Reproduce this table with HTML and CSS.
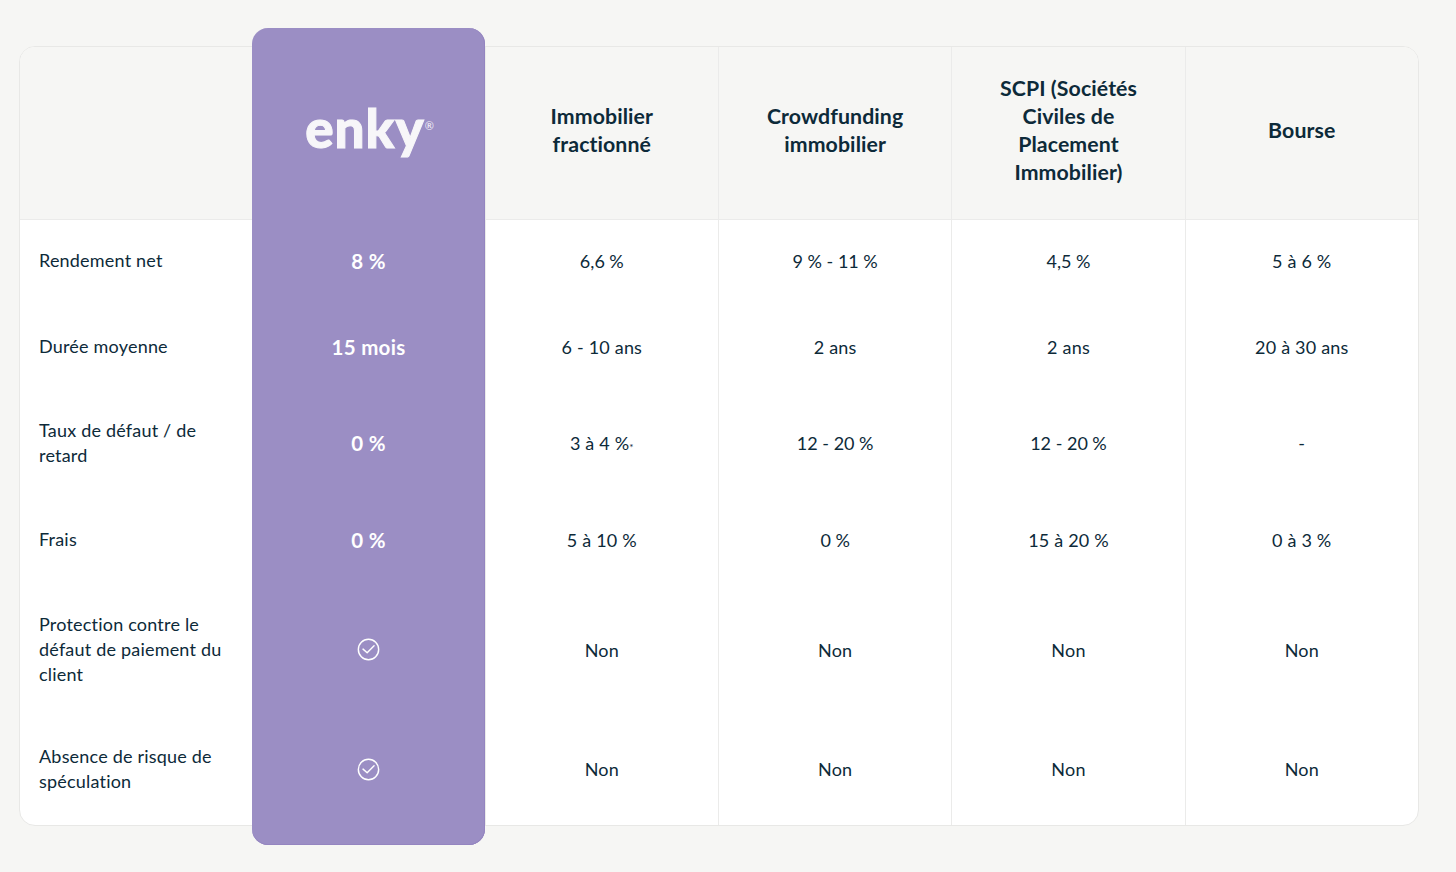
FILE: index.html
```html
<!DOCTYPE html>
<html lang="fr">
<head>
<meta charset="utf-8">
<title>Comparatif enky</title>
<link rel="stylesheet" href="styles.css">
</head>
<body>
<main class="page">
  <section class="card">
    <div class="col col-label">
      <div class="cell head"></div>
      <div class="cell r1 label">Rendement net</div>
      <div class="cell r2 label">Durée moyenne</div>
      <div class="cell r3 label">Taux de défaut / de<br>retard</div>
      <div class="cell r4 label">Frais</div>
      <div class="cell r5 label">Protection contre le<br>défaut de paiement du<br>client</div>
      <div class="cell r6 label">Absence de risque de<br>spéculation</div>
    </div>
    <div class="col col-enky">
      <div class="cell head"><span class="logo">enky<sup class="reg">®</sup></span></div>
      <div class="cell r1 val">8 %</div>
      <div class="cell r2 val">15 mois</div>
      <div class="cell r3 val">0 %</div>
      <div class="cell r4 val">0 %</div>
      <div class="cell r5 val"><svg class="check" viewBox="0 0 24 24"><circle cx="12" cy="12" r="10.6"/><polyline points="6.3,11.6 10.6,15.4 17.8,8.2"/></svg></div>
      <div class="cell r6 val"><svg class="check" viewBox="0 0 24 24"><circle cx="12" cy="12" r="10.6"/><polyline points="6.3,11.6 10.6,15.4 17.8,8.2"/></svg></div>
    </div>
    <div class="col col-data">
      <div class="cell head title">Immobilier<br>fractionné</div>
      <div class="cell r1">6,6&#8239;%</div>
      <div class="cell r2">6 - 10 ans</div>
      <div class="cell r3">3 à 4&#8239;%<sup class="star">*</sup></div>
      <div class="cell r4">5 à 10&#8239;%</div>
      <div class="cell r5">Non</div>
      <div class="cell r6">Non</div>
    </div>
    <div class="col col-data">
      <div class="cell head title">Crowdfunding<br>immobilier</div>
      <div class="cell r1">9&#8239;% - 11&#8239;%</div>
      <div class="cell r2">2 ans</div>
      <div class="cell r3">12 - 20&#8239;%</div>
      <div class="cell r4">0&#8239;%</div>
      <div class="cell r5">Non</div>
      <div class="cell r6">Non</div>
    </div>
    <div class="col col-data">
      <div class="cell head title">SCPI (Sociétés<br>Civiles de<br>Placement<br>Immobilier)</div>
      <div class="cell r1">4,5&#8239;%</div>
      <div class="cell r2">2 ans</div>
      <div class="cell r3">12 - 20&#8239;%</div>
      <div class="cell r4">15 à 20&#8239;%</div>
      <div class="cell r5">Non</div>
      <div class="cell r6">Non</div>
    </div>
    <div class="col col-data col-last">
      <div class="cell head title">Bourse</div>
      <div class="cell r1">5 à 6&#8239;%</div>
      <div class="cell r2">20 à 30 ans</div>
      <div class="cell r3">-</div>
      <div class="cell r4">0 à 3&#8239;%</div>
      <div class="cell r5">Non</div>
      <div class="cell r6">Non</div>
    </div>
  </section>
</main>
</body>
</html>
```

FILE: styles.css
```css
* { box-sizing: border-box; }

html, body {
  margin: 0;
  padding: 0;
  background: #f6f6f4;
}

body {
  font-family: "Lato", "Liberation Sans", sans-serif;
  color: #0d2a39;
  width: 1456px;
  height: 872px;
  overflow: hidden;
}

.page {
  padding: 46px 0 0 19px;
}

.card {
  width: 1400px;
  display: flex;
  background: #ffffff;
  border: 1px solid #e8e8e6;
  border-radius: 16px;
}

.col {
  flex: 1 1 0;
  display: flex;
  flex-direction: column;
  min-width: 0;
}

.col-data {
  border-left: 1px solid #ebebea;
}

.cell {
  display: flex;
  align-items: center;
  justify-content: center;
  text-align: center;
  font-size: 18px;
  line-height: 24px;
  padding-bottom: 3px;
  letter-spacing: 0.2px;
}

.head {
  height: 173px;
  background: #f6f6f4;
  border-bottom: 1px solid #ebebea;
  padding-bottom: 6px;
}

.col-label .head { border-top-left-radius: 15px; }
.col-last .head { border-top-right-radius: 15px; }

.r1 { height: 84px; }
.r2 { height: 88px; }
.r3 { height: 104px; }
.r4 { height: 90px; }
.r5 { height: 130px; }
.r6 { height: 109px; }

.label {
  justify-content: flex-start;
  text-align: left;
  padding-left: 19px;
  font-size: 18px;
  line-height: 25px;
}

.title {
  font-weight: 700;
  font-size: 21.3px;
  line-height: 28px;
  letter-spacing: 0.1px;
}

.col-enky {
  margin: -19px 0 -20px;
  padding: 19px 0 20px;
  background: #9b8ec4;
  border-radius: 16px;
  box-shadow: inset -1px 0 0 #9485c0, inset 0 -1px 0 #9485c0;
  position: relative;
}

.col-enky .head {
  background: transparent;
  border-bottom: none;
  padding-bottom: 12px;
}

.logo {
  color: #f7f6f9;
  font-weight: 900;
  font-size: 53px;
  line-height: 50px;
  letter-spacing: 1px;
  margin-left: 2px;
  -webkit-text-stroke: 1px #f7f6f9;
}

.reg {
  font-size: 11px;
  font-weight: 400;
  letter-spacing: 0;
  -webkit-text-stroke: 0;
  vertical-align: top;
  position: relative;
  top: -2px;
  margin-left: 0;
}

.val {
  color: #ffffff;
  font-weight: 700;
  font-size: 20.5px;
  letter-spacing: 0.3px;
}

.check {
  width: 23px;
  height: 23px;
  fill: none;
  stroke: #ffffff;
  stroke-width: 1.5;
  stroke-linecap: round;
  stroke-linejoin: round;
}

.star {
  font-size: 10px;
  line-height: 0;
  vertical-align: top;
  position: relative;
  top: 4px;
}
```
